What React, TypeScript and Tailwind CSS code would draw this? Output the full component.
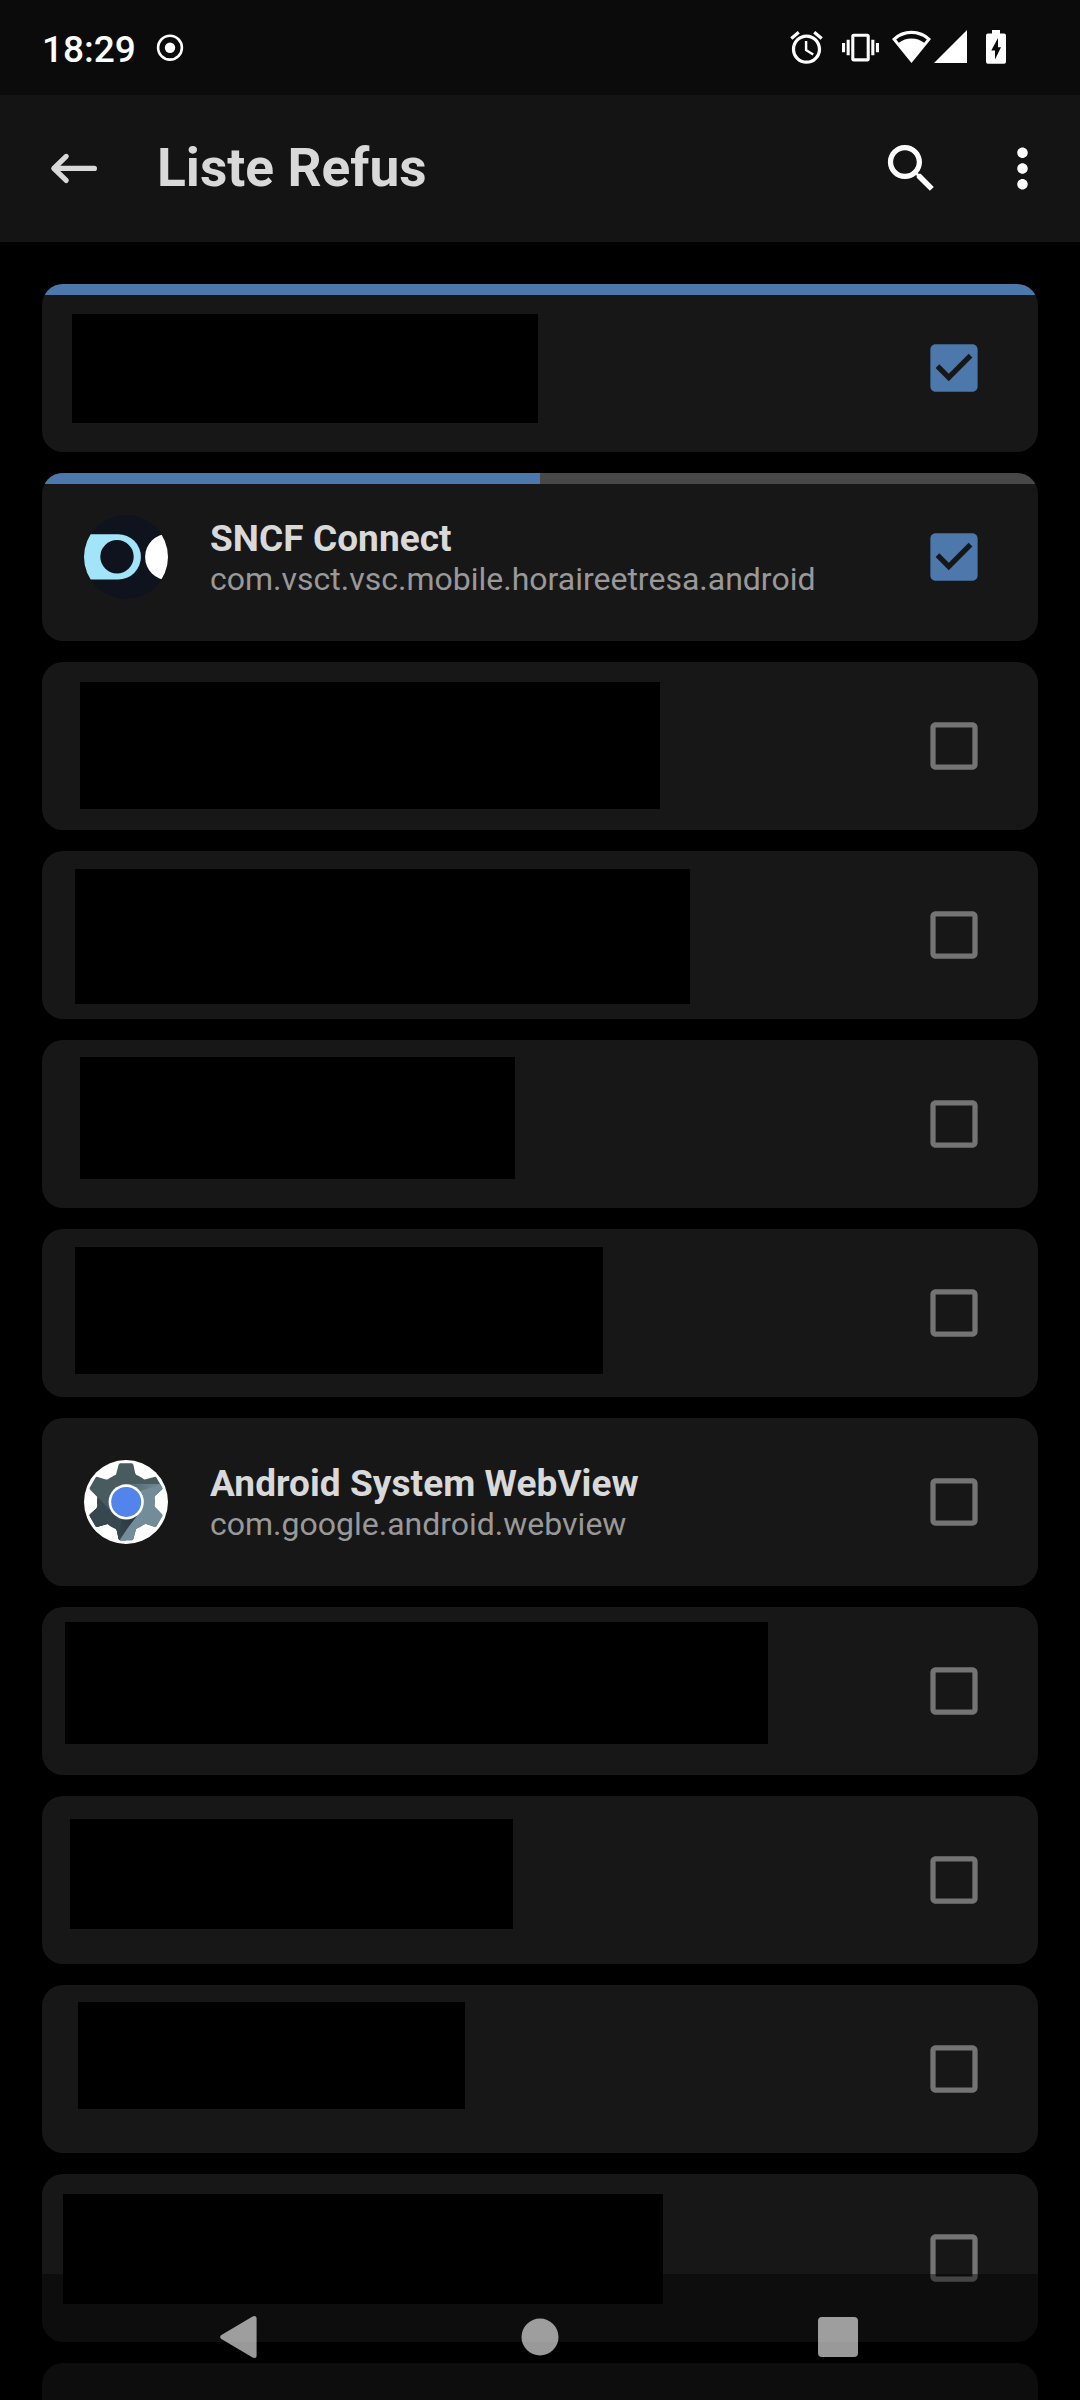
import type { ReactNode } from "react";

type Row = {
  id: number;
  checked?: boolean;
  /** Progress strip along the top edge: a track with a filled part. */
  progress?: "full" | "half";
  /** Size and margins of the black block that hides the entry. */
  mask?: string;
  icon?: ReactNode;
  name?: string;
  pkg?: string;
};

function SncfIcon() {
  return (
    <svg className="size-[84px] shrink-0" viewBox="0 0 84 84">
      <defs>
        <clipPath id="sncf-clip">
          <circle cx="42" cy="42" r="42" />
        </clipPath>
      </defs>
      <g clipPath="url(#sncf-clip)">
        <rect width="84" height="84" fill="#0f131d" />
        <path d="M0 19.2H34.2a22.7 22.7 0 0 1 0 45.4H0Z" fill="#a2e5fb" />
        <circle cx="33" cy="41.7" r="16.7" fill="#0f131d" />
        <circle cx="84.4" cy="42" r="23.3" fill="#fff" />
      </g>
    </svg>
  );
}

const GEAR =
  "M-10 -27.3L-7.4 -37Q-7 -38.5 -5.6 -38.5H5.6Q7 -38.5 7.4 -37L9.2 -28.6Q10 -26.6 12.4 -26L14.4 -24.9L0 0L-14.4 -24.9L-12.4 -26Q-10 -26.6 -9.2 -28.6Z";

function WebViewIcon() {
  return (
    <svg className="size-[84px] shrink-0" viewBox="0 0 84 84">
      <defs>
        <clipPath id="gear-clip">
          <path d={GEAR} transform="translate(42 41.8)" />
          <path d={GEAR} transform="translate(42 41.8) rotate(60)" />
          <path d={GEAR} transform="translate(42 41.8) rotate(120)" />
          <path d={GEAR} transform="translate(42 41.8) rotate(180)" />
          <path d={GEAR} transform="translate(42 41.8) rotate(240)" />
          <path d={GEAR} transform="translate(42 41.8) rotate(300)" />
          <circle cx="42" cy="41.8" r="27" />
        </clipPath>
        <linearGradient id="gear-top-shade" x1="0" y1="0" x2="1" y2="0">
          <stop offset="0" stopColor="#4f646b" />
          <stop offset="1" stopColor="#738c99" />
        </linearGradient>
        <linearGradient id="gear-low-shade" x1="1" y1="0" x2="0" y2="1">
          <stop offset="0" stopColor="#2b363b" />
          <stop offset="1" stopColor="#37474f" />
        </linearGradient>
        <linearGradient id="gear-left-shade" x1="0" y1="0" x2="0.6" y2="1">
          <stop offset="0" stopColor="#435559" />
          <stop offset="1" stopColor="#37474f" />
        </linearGradient>
      </defs>
      <circle cx="42" cy="42" r="42" fill="#fff" />
      <g clipPath="url(#gear-clip)">
        <rect width="84" height="84" fill="#485c60" />
        <path d="M0 26L12 34L28 53L42 60V84H0Z" fill="url(#gear-left-shade)" />
        <path d="M0 29L12 36L26 50L42 60V84H0Z" fill="#37474f" />
        <path d="M42 24.3H84V84H33L52 56Z" fill="#738c99" />
        <path d="M42 24.3H78L56 31Z" fill="url(#gear-top-shade)" />
        <path d="M53 56L34 80L38 58Z" fill="url(#gear-low-shade)" />
      </g>
      <circle cx="42.2" cy="41.9" r="17.6" fill="#fff" />
      <circle cx="42.2" cy="41.9" r="15" fill="#5284ec" />
    </svg>
  );
}

const rows: Row[] = [
  { id: 1, checked: true, progress: "full", mask: "ml-[30px] mt-[30px] w-[466px] h-[109px]" },
  {
    id: 2,
    checked: true,
    progress: "half",
    icon: <SncfIcon />,
    name: "SNCF Connect",
    pkg: "com.vsct.vsc.mobile.horaireetresa.android",
  },
  { id: 3, mask: "ml-[38px] mt-[20px] w-[580px] h-[127px]" },
  { id: 4, mask: "ml-[33px] mt-[18px] w-[615px] h-[135px]" },
  { id: 5, mask: "ml-[38px] mt-[17px] w-[435px] h-[122px]" },
  { id: 6, mask: "ml-[33px] mt-[18px] w-[528px] h-[127px]" },
  { id: 7, icon: <WebViewIcon />, name: "Android System WebView", pkg: "com.google.android.webview" },
  { id: 8, mask: "ml-[23px] mt-[15px] w-[703px] h-[122px]" },
  { id: 9, mask: "ml-[28px] mt-[23px] w-[443px] h-[110px]" },
  { id: 10, mask: "ml-[35.5px] mt-[17px] w-[387.5px] h-[107px]" },
  { id: 11, mask: "ml-[20.5px] mt-[20px] w-[600.5px] h-[110px]" },
  { id: 12 },
];

function Checkbox({ checked }: { checked?: boolean }) {
  return (
    <svg className="size-[64px]" viewBox="-0.19 -0.19 24.38 24.38">
      {checked ? (
        <path
          fill="#4c78ab"
          d="M19 3H5c-1.11 0-2 .9-2 2v14c0 1.1.89 2 2 2h14c1.11 0 2-.9 2-2V5c0-1.1-.89-2-2-2zm-9 14l-5-5 1.41-1.41L10 14.17l7.59-7.59L19 8l-9 9z"
        />
      ) : (
        <path
          fill="#747474"
          d="M19 5v14H5V5h14m0-2H5c-1.1 0-2 .9-2 2v14c0 1.1.9 2 2 2h14c1.1 0 2-.9 2-2V5c0-1.1-.9-2-2-2z"
        />
      )}
    </svg>
  );
}

function Card({ row }: { row: Row }) {
  return (
    <li className="relative flex h-[168px] shrink-0 overflow-hidden rounded-[21px] bg-[#171717]">
      {row.progress && (
        <div className="absolute inset-x-0 top-0 h-[11px] bg-[#484848]">
          <div className={row.progress === "full" ? "h-full w-full bg-[#4c78ab]" : "h-full w-1/2 bg-[#4c78ab]"} />
        </div>
      )}
      <div className="flex flex-1">
        {row.mask && <div className={`bg-black ${row.mask}`} />}
        {row.name && (
          <div className="flex items-center gap-[42px] pl-[42px]">
            {row.icon}
            <div className="flex flex-col whitespace-nowrap">
              <span className="text-[37px] leading-[43px] font-bold tracking-[0.06px] text-[#d9d9d9]">{row.name}</span>
              <span className="-mb-[2px] text-[32px] leading-[39px] text-[#999999]">{row.pkg}</span>
            </div>
          </div>
        )}
      </div>
      <div className="mr-[52px] flex items-center">
        <Checkbox checked={row.checked} />
      </div>
    </li>
  );
}

function StatusBar() {
  return (
    <div className="flex h-[95px] shrink-0 items-start justify-between bg-[#0b0b0b] pt-[28px] pr-[74px] pl-[42px] text-white">
      <div className="flex">
        <span className="w-[95px] text-[37px] leading-[43px] font-medium">18:29</span>
        <svg className="mt-[3px] ml-[17px] size-[32px]" viewBox="0 0 32 32">
          <circle cx="16" cy="16.7" r="11.9" fill="none" stroke="currentColor" strokeWidth="2.6" />
          <circle cx="16" cy="16.7" r="5.2" fill="currentColor" />
        </svg>
      </div>
      <div className="flex fill-white">
        <svg className="size-[39px]" viewBox="0 0 24 24">
          <path d="M22 5.72l-4.6-3.86-1.29 1.53 4.6 3.86L22 5.72zM7.88 3.39L6.6 1.86 2 5.71l1.29 1.53 4.59-3.85zM12.5 8H11v6l4.75 2.85.75-1.23-4-2.37V8zM12 4c-4.97 0-9 4.03-9 9s4.02 9 9 9c4.97 0 9-4.03 9-9s-4.03-9-9-9zm0 16c-3.87 0-7-3.13-7-7s3.13-7 7-7 7 3.13 7 7-3.13 7-7 7z" />
        </svg>
        <svg className="mt-px ml-[16px] size-[37px]" viewBox="0 0 24 24">
          <path d="M0 15h2V9H0v6zm3 2h2V7H3v10zm19-8v6h2V9h-2zm-3 8h2V7h-2v10zM16.5 3h-9C6.67 3 6 3.67 6 4.5v15c0 .83.67 1.5 1.5 1.5h9c.83 0 1.5-.67 1.5-1.5v-15c0-.83-.67-1.5-1.5-1.5zM16 19H8V5h8v14z" />
        </svg>
        <svg className="mt-[2px] ml-[13px] h-[33px] w-[39px]" viewBox="0 0 39 33">
          <path
            fillRule="evenodd"
            d="M0 9A27 27 0 0 1 39 9L19.5 33ZM4.2 9.6L6.8 12.7A21 21 0 0 1 32.2 12.7L34.8 9.6A24 24 0 0 0 4.2 9.6Z"
          />
        </svg>
        <svg className="mt-[2px] ml-[3px] size-[33px]" viewBox="0 0 33 33">
          <path d="M0 33L33 0V33Z" />
        </svg>
        <svg className="mt-[2px] ml-[19px] h-[34px] w-[20px]" viewBox="0 0 20 34">
          <path
            fillRule="evenodd"
            d="M6 0H14V3.4H18Q20 3.4 20 5.4V31.8Q20 33.8 18 33.8H2Q0 33.8 0 31.8V5.4Q0 3.4 2 3.4H6ZM12 8L5.3 20.6H9V29.4L15 17.2H12Z"
          />
        </svg>
      </div>
    </div>
  );
}

function AppBar() {
  return (
    <header className="flex h-[147px] shrink-0 items-center bg-[#141414] pr-[26px] pl-[42px]">
      <svg className="size-[63px]" viewBox="0 0 63 63" fill="none" stroke="#d9d9d9" strokeWidth="5.2" strokeLinecap="round" strokeLinejoin="round">
        <path d="M52.4 31.4H12M24.2 19.4L11.8 31.4L24.2 43.4" />
      </svg>
      <h1 className="ml-[52px] flex-1 pb-px text-[53.3px] leading-[62px] font-bold text-[#d9d9d9]">Liste Refus</h1>
      <svg className="size-[63px] fill-white" viewBox="0 0 24 24">
        <path d="M15.5 14h-.79l-.28-.27C15.41 12.59 16 11.11 16 9.5 16 5.91 13.09 3 9.5 3S3 5.91 3 9.5 5.91 16 9.5 16c1.61 0 3.09-.59 4.23-1.57l.27.28v.79l5 4.99L20.49 19l-4.99-5zm-6 0C7.01 14 5 11.99 5 9.5S7.01 5 9.5 5 14 7.01 14 9.5 11.99 14 9.5 14z" />
      </svg>
      <svg className="ml-[48px] size-[63px] fill-white" viewBox="0 0 24 24">
        <path d="M12 8c1.1 0 2-.9 2-2s-.9-2-2-2-2 .9-2 2 .9 2 2 2zm0 2c-1.1 0-2 .9-2 2s.9 2 2 2 2-.9 2-2-.9-2-2-2zm0 6c-1.1 0-2 .9-2 2s.9 2 2 2 2-.9 2-2-.9-2-2-2z" />
      </svg>
    </header>
  );
}

function NavBar() {
  return (
    <nav className="absolute inset-x-0 bottom-0 flex h-[126px] items-center bg-black/40 pl-[219px]">
      <svg className="h-[44px] w-[38px] fill-white/60" viewBox="0 0 38 44">
        <path d="M2 20.3L33.6 1.5Q37.6 0 37.6 3.6V40.4Q37.6 44 33.6 42.5L2 23.7Q0.4 22 2 20.3Z" />
      </svg>
      <svg className="ml-[264px] size-[38px] fill-white/60" viewBox="0 0 38 38">
        <circle cx="19" cy="19" r="18.5" />
      </svg>
      <div className="ml-[259px] size-[40px] rounded-[4px] bg-white/60" />
    </nav>
  );
}

export default function App() {
  return (
    <div className="relative flex h-[2400px] w-[1080px] flex-col overflow-hidden bg-black font-[Roboto,sans-serif]">
      <StatusBar />
      <AppBar />
      <ul className="flex min-h-0 flex-1 flex-col gap-[21px] overflow-hidden px-[42px] pt-[42px]">
        {rows.map((row) => (
          <Card key={row.id} row={row} />
        ))}
      </ul>
      <NavBar />
    </div>
  );
}
